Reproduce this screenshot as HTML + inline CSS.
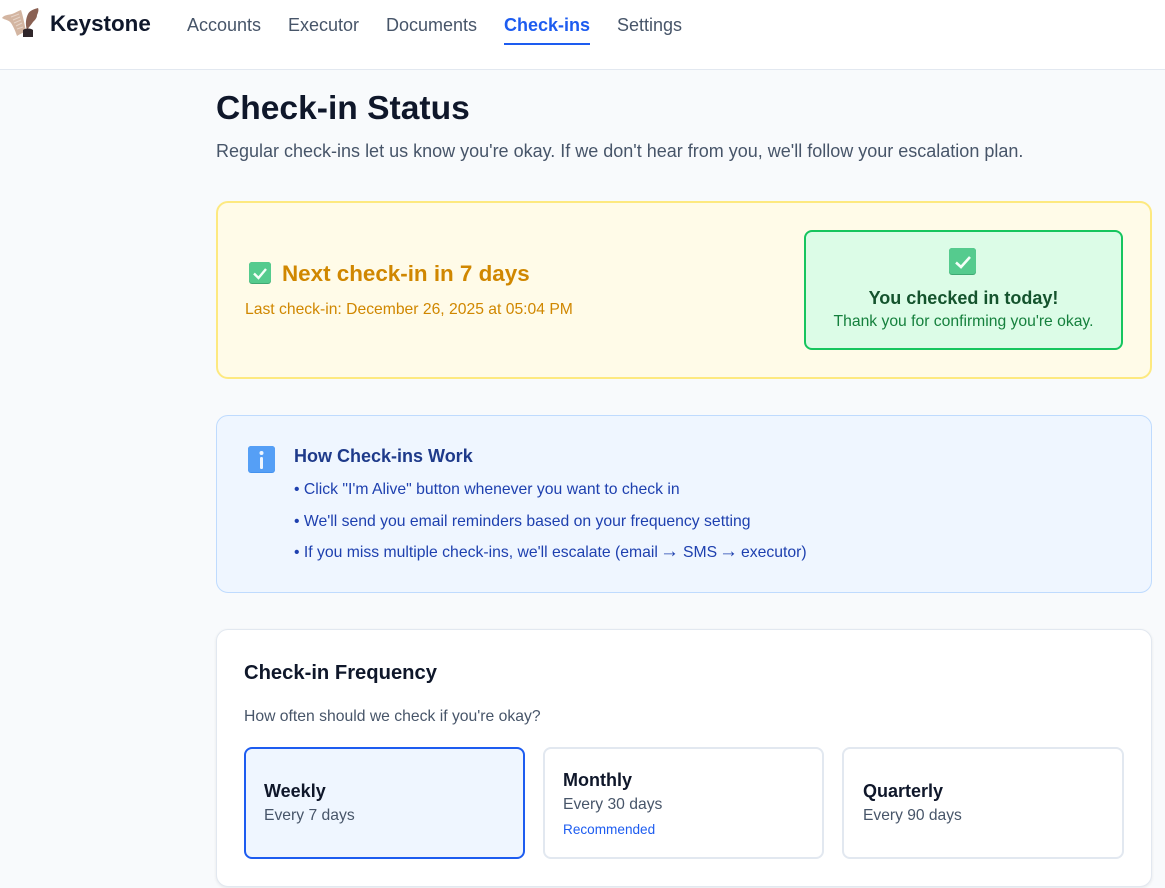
<!DOCTYPE html>
<html><head><meta charset="utf-8">
<style>
*{box-sizing:border-box;margin:0;padding:0}
html,body{width:1165px;height:888px;overflow:hidden;background:#f8fafc;font-family:"Liberation Sans",sans-serif}
.a{position:absolute;white-space:nowrap}
.box{position:absolute}
svg{position:absolute;display:block}
</style></head><body>
<div class="box" style="left:0;top:0;width:1165px;height:70px;background:#fff;border-bottom:1px solid #e2e8f0"></div>
<svg style="left:0;top:0" width="44" height="40" viewBox="0 0 44 40">
<path d="M2 18 C4 15 8 15 12 14 C15 13 18 11 21 10 C23 16 24 22 26 31 C23 33 20 34 17 36 C15 30 13 26 11 23 C9 20 5 20 2 18Z" fill="#d3b5a1"/>
<path d="M11 17 L19 14 M13 20 L20 17 M14 23 L21 20 M16 26 L22 23 M17 29 L23 27" stroke="#e6d4c8" stroke-width="1" fill="none"/>
<path d="M27 30 C25 24 26 18 28 14 C30 10 35 9 38 8 C39 10 38 13 37 15 C37 18 35 20 33 22 C31 25 29 27 27 30Z" fill="#8a6153"/>
<path d="M23 30 C25 28 31 28 33 30 V37 H23Z" fill="#30262a"/>
</svg>
<div class="a" style="left:50px;top:10px;font-size:22.4px;line-height:28px;font-weight:700;color:#0f172a">Keystone</div>
<div class="a" style="left:187px;top:14px;font-size:18px;line-height:22px;color:#475569">Accounts</div>
<div class="a" style="left:288px;top:14px;font-size:18px;line-height:22px;color:#475569">Executor</div>
<div class="a" style="left:386px;top:14px;font-size:18px;line-height:22px;color:#475569">Documents</div>
<div class="a" style="left:504px;top:14px;font-size:18px;line-height:22px;font-weight:700;color:#1d5cf0">Check-ins</div>
<div class="box" style="left:504px;top:43px;width:86px;height:2px;background:#1d5cf0"></div>
<div class="a" style="left:617px;top:14px;font-size:18px;line-height:22px;color:#475569">Settings</div>

<div class="a" style="left:216px;top:89px;font-size:33.6px;line-height:40px;font-weight:700;color:#0f172a">Check-in Status</div>
<div class="a" style="left:216px;top:140px;font-size:18px;line-height:22px;color:#475569">Regular check-ins let us know you're okay. If we don't hear from you, we'll follow your escalation plan.</div>

<div class="box" style="left:216px;top:201px;width:936px;height:178px;background:#fffbe8;border:2px solid #fde980;border-radius:12px"></div>
<svg style="left:249px;top:262px" width="22" height="22" viewBox="0 0 22 22"><rect width="22" height="22" rx="3" fill="#3fa873"/><rect width="22" height="21" rx="3" fill="#55cb8e"/><path d="M5 11.5 L9.5 16 L17 7" fill="none" stroke="#f4fff8" stroke-width="2.4"/></svg>
<div class="a" style="left:282px;top:260px;font-size:22.4px;line-height:28px;font-weight:700;color:#d08700">Next check-in in 7 days</div>
<div class="a" style="left:245px;top:300px;font-size:15.7px;line-height:20px;color:#d08700">Last check-in: December 26, 2025 at 05:04 PM</div>

<div class="box" style="left:804px;top:230px;width:319px;height:120px;background:#dcfce7;border:2px solid #16c55e;border-radius:8px"></div>
<svg style="left:949px;top:248px" width="27" height="27" viewBox="0 0 27 27"><rect width="27" height="27" rx="3" fill="#3fa873"/><rect width="27" height="26" rx="3" fill="#55cb8e"/><path d="M7 14.5 L12 19 L21 9" fill="none" stroke="#f4fff8" stroke-width="2.6"/></svg>
<div class="a" style="left:804px;width:319px;text-align:center;top:287px;font-size:18px;line-height:22px;font-weight:700;color:#14532d">You checked in today!</div>
<div class="a" style="left:804px;width:319px;text-align:center;top:312px;font-size:15.7px;line-height:20px;color:#15803d">Thank you for confirming you're okay.</div>

<div class="box" style="left:216px;top:415px;width:936px;height:178px;background:#eff6ff;border:1px solid #bfdbfe;border-radius:12px"></div>
<svg style="left:248px;top:446px" width="27" height="27" viewBox="0 0 27 27"><rect width="27" height="27" rx="3" fill="#4392ef"/><rect width="27" height="26" rx="3" fill="#559ff6"/><circle cx="13.5" cy="7" r="2" fill="#eef6ff"/><rect x="12" y="11" width="3" height="12" rx="1.4" fill="#eef6ff"/></svg>
<div class="a" style="left:294px;top:445px;font-size:18px;line-height:22px;font-weight:700;color:#1e3a8a">How Check-ins Work</div>
<div class="a" style="left:294px;top:480px;font-size:15.75px;line-height:20px;color:#1e40af">• Click "I'm Alive" button whenever you want to check in</div>
<div class="a" style="left:294px;top:512px;font-size:15.75px;line-height:20px;color:#1e40af">• We'll send you email reminders based on your frequency setting</div>
<div class="a" style="left:294px;top:543px;font-size:15.75px;line-height:20px;color:#1e40af">• If you miss multiple check-ins, we'll escalate (email</div>
<div class="a" style="left:660px;top:541px;font-size:19px;line-height:22px;color:#1e40af">→</div>
<div class="a" style="left:683px;top:543px;font-size:15.75px;line-height:20px;color:#1e40af">SMS</div>
<div class="a" style="left:719px;top:541px;font-size:19px;line-height:22px;color:#1e40af">→</div>
<div class="a" style="left:741px;top:543px;font-size:15.75px;line-height:20px;color:#1e40af">executor)</div>

<div class="box" style="left:216px;top:629px;width:936px;height:258px;background:#fff;border:1px solid #e2e8f0;border-radius:12px;box-shadow:0 1px 3px rgba(0,0,0,.08)"></div>
<div class="a" style="left:244px;top:661px;font-size:20.2px;line-height:24px;font-weight:700;color:#0f172a">Check-in Frequency</div>
<div class="a" style="left:244px;top:707px;font-size:15.73px;line-height:20px;color:#475569">How often should we check if you're okay?</div>

<div class="box" style="left:244px;top:747px;width:281px;height:112px;background:#eff6ff;border:2px solid #1d5cf0;border-radius:8px"></div>
<div class="a" style="left:264px;top:780px;font-size:18px;line-height:22px;font-weight:700;color:#0f172a">Weekly</div>
<div class="a" style="left:264px;top:806px;font-size:15.7px;line-height:20px;color:#475569">Every 7 days</div>

<div class="box" style="left:543px;top:747px;width:281px;height:112px;background:#fff;border:2px solid #e2e8f0;border-radius:8px"></div>
<div class="a" style="left:563px;top:769px;font-size:18px;line-height:22px;font-weight:700;color:#0f172a">Monthly</div>
<div class="a" style="left:563px;top:795px;font-size:15.7px;line-height:20px;color:#475569">Every 30 days</div>
<div class="a" style="left:563px;top:821px;font-size:13.6px;line-height:18px;color:#1d5cf0">Recommended</div>

<div class="box" style="left:842px;top:747px;width:282px;height:112px;background:#fff;border:2px solid #e2e8f0;border-radius:8px"></div>
<div class="a" style="left:863px;top:780px;font-size:18px;line-height:22px;font-weight:700;color:#0f172a">Quarterly</div>
<div class="a" style="left:863px;top:806px;font-size:15.6px;line-height:20px;color:#475569">Every 90 days</div>
</body></html>
